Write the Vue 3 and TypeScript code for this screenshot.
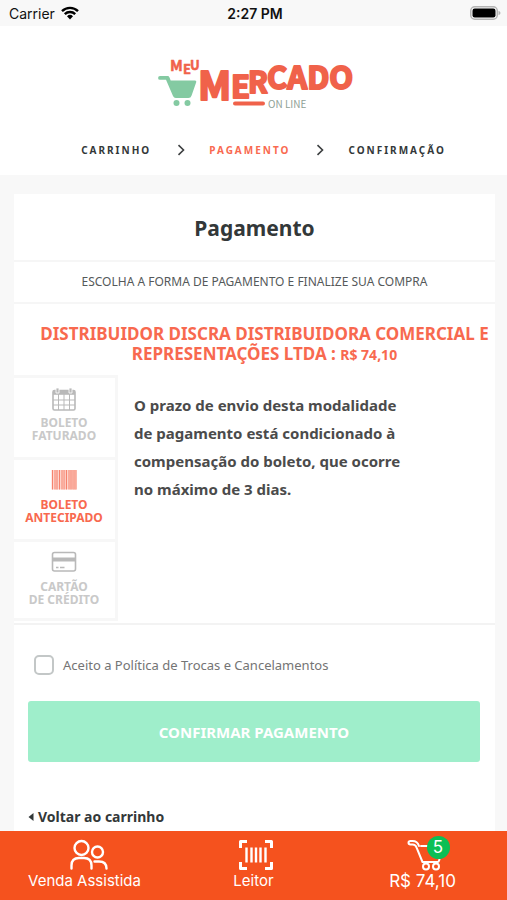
<script setup lang="ts">
import { ref } from 'vue'

type Method = 'faturado' | 'antecipado' | 'cartao'

interface PaymentMethod {
  id: Method
  lines: string[]
}

const steps: string[] = ['Carrinho', 'Pagamento', 'Confirmação']
const currentStep = 1

const methods: PaymentMethod[] = [
  { id: 'faturado', lines: ['Boleto', 'Faturado'] },
  { id: 'antecipado', lines: ['Boleto', 'Antecipado'] },
  { id: 'cartao', lines: ['Cartão', 'de Crédito'] },
]

const selected = ref<Method>('antecipado')
const accepted = ref(false)
</script>

<template>
  <div class="screen">
    <div class="status">
      <span class="carrier">
        Carrier
        <svg width="18" height="14" viewBox="0 0 18 14" aria-hidden="true">
          <g fill="none" stroke="#000" stroke-width="2.4">
            <path d="M1 5.2a11.4 11.4 0 0 1 16 0" />
            <path d="M3.8 8.2a7.4 7.4 0 0 1 10.4 0" />
          </g>
          <path d="M6 10.3a4.3 4.3 0 0 1 6 0L9 13.5z" />
        </svg>
      </span>
      <strong class="clock">2:27 PM</strong>
      <svg class="battery" width="31" height="14" viewBox="0 0 31 14" aria-hidden="true">
        <rect x="0.75" y="0.75" width="26.5" height="12.5" rx="4" fill="#f8f8f8" stroke="#b4b4b4" stroke-width="1.5" />
        <rect x="2.5" y="2.5" width="23" height="9" rx="2.2" />
        <path d="M28.5 4.8q2 .8 2 2.2t-2 2.2z" fill="#b4b4b4" />
      </svg>
    </div>

    <header class="header">
      <svg class="logo" width="194" height="62" viewBox="0 0 194 62" role="img" aria-label="Meu Mercado Online">
        <g fill="#84caa2">
          <path d="M3 22h7.500q1.500 0 2 1.400l1.200 3.100H38q1.800 0 1.200 1.800l-4.600 13.200q-.8 2.500-3.200 2.500H18.800q-2 0-2.800-2L9 25.800H3a1.900 1.900 0 0 1 0-3.800z" />
          <circle cx="19.500" cy="49" r="3" />
          <circle cx="30.500" cy="49" r="3" />
        </g>
        <g class="lettering" fill="#f0624a" stroke="#f0624a" stroke-linejoin="round">
          <text x="13" y="17" font-size="15" stroke-width="0.500">M</text>
          <text x="26" y="20" font-size="13" stroke-width="0.500">E</text>
          <text x="33" y="16" font-size="13" stroke-width="0.500">U</text>
          <text x="41" y="46" font-size="39" stroke-width="2">M</text>
          <text x="74" y="44" font-size="31" stroke-width="2">E</text>
          <text x="91" y="39" font-size="29" stroke-width="2">R</text>
          <text x="110" y="35" font-size="31" stroke-width="2">CADO</text>
          <path d="M78 49.500h28" fill="none" stroke-width="4" stroke-linecap="round" />
        </g>
        <text class="online" x="111" y="54" font-size="10" fill="#8fa196">ON LINE</text>
      </svg>
      <nav aria-label="Etapas">
        <ol class="steps">
          <li v-for="(step, i) in steps" :key="step" class="step" :class="{ current: i === currentStep }">
            <svg v-if="i > 0" width="8" height="12" viewBox="0 0 8 12" aria-hidden="true">
              <path d="M1.500 1.200 6.500 6l-5 4.800" fill="none" stroke="#3c3f40" stroke-width="1.600" />
            </svg>
            <span>{{ step }}</span>
          </li>
        </ol>
      </nav>
    </header>

    <main class="card">
      <h1 class="title">Pagamento</h1>
      <p class="subtitle">Escolha a forma de pagamento e finalize sua compra</p>
      <h2 class="seller">
        Distribuidor Discra Distribuidora Comercial e Representações Ltda : <small>R$ 74,10</small>
      </h2>

      <section class="payment">
        <div class="methods">
          <button
            v-for="m in methods"
            :key="m.id"
            type="button"
            class="method"
            :class="{ active: selected === m.id }"
            :aria-pressed="selected === m.id"
            @click="selected = m.id"
          >
            <svg v-if="m.id === 'faturado'" width="26" height="24" viewBox="0 0 26 24" aria-hidden="true">
              <g fill="none" stroke="currentColor">
                <rect x="2" y="3.500" width="22" height="19.500" rx="1.500" stroke-width="1.600" />
                <path d="M2 13h22M2 18h22M7.500 7V23M13 7V23M18.500 7V23" stroke-width="1" />
                <path d="M2 5.800h22" stroke-width="4" />
              </g>
              <path d="M5 1h3v5H5zM18 1h3v5h-3z" fill="#b9b9b9" stroke="#fff" stroke-width="0.800" />
            </svg>
            <svg v-else-if="m.id === 'antecipado'" width="26" height="24" viewBox="0 0 26 24" aria-hidden="true">
              <path d="M0.500 1h25v19.500h-25z" fill="#fdd5cd" />
              <path
                d="M1.500 1v19.500M4 1v19.500M8.500 1v19.500M11 1v19.500M15.500 1v19.500M18 1v19.500M22 1v19.500M25 1v19.500"
                stroke="#f6836d"
                stroke-width="1"
              />
              <path d="M6 1v19.500M13.200 1v19.500M20 1v19.500M23.500 1v19.500" stroke="#f9a798" stroke-width="2" />
            </svg>
            <svg v-else width="26" height="24" viewBox="0 0 26 24" aria-hidden="true">
              <rect x="1.500" y="1.500" width="23" height="18.500" rx="2" fill="none" stroke="currentColor" stroke-width="1.600" />
              <path d="M1.500 6.500h23v4h-23z" fill="currentColor" />
              <path d="M5 16.500h2.500M9 16.500h4.500" stroke="currentColor" stroke-width="1.500" />
            </svg>
            <span class="label">
              <span v-for="line in m.lines" :key="line">{{ line }}</span>
            </span>
          </button>
        </div>
        <p class="notice">
          O prazo de envio desta modalidade de pagamento está condicionado à compensação do boleto, que ocorre no
          máximo de 3 dias.
        </p>
      </section>

      <form class="confirm" @submit.prevent>
        <div class="terms">
          <input id="terms" v-model="accepted" type="checkbox" />
          <label for="terms">Aceito a Política de Trocas e Cancelamentos</label>
        </div>
        <button type="submit" class="submit">Confirmar pagamento</button>
      </form>

      <a href="#carrinho" class="back">
        <svg width="6" height="8" viewBox="0 0 6 8" aria-hidden="true"><path d="M5.500 0v8L0.500 4z" fill="#333839" /></svg>
        Voltar ao carrinho
      </a>
    </main>

    <nav class="tabbar" aria-label="Principal">
      <a href="#venda" class="tab">
        <svg width="40" height="32" viewBox="-4 0 40 32" aria-hidden="true">
          <g fill="none" stroke="#fff" stroke-width="2.400" stroke-linecap="round">
            <circle cx="12.500" cy="9" r="7" />
            <circle cx="28.500" cy="13" r="5.500" />
            <path d="M2.500 29.500v-3q0-7.500 7.500-7.500h5q7.500 0 7.500 7.500v3" />
            <path d="M25.500 22.500h4.500q7.500 0 7.500 7" />
          </g>
        </svg>
        <span>Venda Assistida</span>
      </a>
      <a href="#leitor" class="tab">
        <svg width="40" height="32" viewBox="0 0 40 32" aria-hidden="true">
          <g fill="none" stroke="#fff" stroke-width="3">
            <path d="M6.500 9V2.500H13M31 2.500h6.500V9M37.500 23v6.500H31M13 29.500H6.500V23" stroke-linejoin="round" />
            <path d="M12.500 8.500v15M17.500 8.500v15M22 8.500v15M26.500 8.500v15M31.500 8.500v15" stroke-width="2.400" />
          </g>
        </svg>
        <span>Leitor</span>
      </a>
      <a href="#cesta" class="tab total">
        <span class="cart">
          <svg width="40" height="32" viewBox="-3 0 40 32" aria-hidden="true">
            <g fill="none" stroke="#fff" stroke-width="2" stroke-linecap="round" stroke-linejoin="round">
              <path d="M15 7h11M13 7q-1.500-5-6.500-5h-2q-2 0-2 1.700t2 1.700h2q3 0 4 3L16.500 23M16.500 23h15q1.200 0 1.600-1.500l1.400-5" />
              <circle cx="20" cy="27.500" r="3" />
              <circle cx="30" cy="27.500" r="3" />
            </g>
          </svg>
          <span class="badge">5</span>
        </span>
        <span>R$ 74,10</span>
      </a>
    </nav>
  </div>
</template>

<style>
body {
  margin: 0;
  background: #f8f8f8;
}
</style>

<style scoped>
.screen {
  display: flex;
  flex-direction: column;
  min-height: 100vh;
  font-family: 'Noto Sans', 'Open Sans', sans-serif;
  color: #333839;
}

svg {
  display: block;
  flex: none;
}

.status {
  display: grid;
  grid-template-columns: 1fr auto 1fr;
  align-items: center;
  height: 26px;
  padding: 0 6px 0 9px;
  background: #f8f8f8;
  color: #111;
  font-family: Inter, sans-serif;
  font-size: 14px;
}

.carrier {
  display: flex;
  align-items: center;
  gap: 6px;
}

.clock {
  font-weight: 600;
}

.battery {
  justify-self: end;
}

.header {
  display: flex;
  flex-direction: column;
  align-items: center;
  gap: 26px;
  box-sizing: border-box;
  height: 149px;
  padding-top: 28px;
  background: #fff;
}

.logo {
  overflow: visible;
}

.lettering,
.online {
  font-family: 'Noto Sans CJK SC', sans-serif;
}

.lettering {
  font-weight: 700;
}

.steps {
  display: flex;
  margin: 0;
  padding: 0 0 0 20px;
  gap: 26px;
  list-style: none;
}

.step {
  display: flex;
  align-items: center;
  gap: 24px;
  font-size: 10px;
  font-weight: 700;
  line-height: 16px;
  letter-spacing: 2px;
  text-transform: uppercase;
}

.current span {
  color: #f96a50;
}

.card {
  display: flex;
  flex: 1;
  flex-direction: column;
  margin: 19px 12px 0 14px;
  background: #fff;
}

.title {
  margin: 0;
  padding-top: 2px;
  border-bottom: 2px solid #f6f6f6;
  font-size: 21px;
  font-weight: 700;
  line-height: 64px;
  text-align: center;
}

.subtitle {
  margin: 0;
  border-bottom: 2px solid #f6f6f6;
  color: #55595a;
  font-size: 12px;
  line-height: 40px;
  text-align: center;
  text-transform: uppercase;
}

.seller {
  margin: 0;
  padding: 20px 0 10px 20px;
  color: #f8694f;
  font-size: 17px;
  font-weight: 700;
  line-height: 20px;
  text-align: center;
  text-transform: uppercase;
}

.seller small {
  font-size: 14px;
}

.payment {
  display: flex;
  padding-bottom: 2px;
  border-bottom: 2px solid #f3f3f3;
}

.methods {
  display: flex;
  flex: none;
  flex-direction: column;
  width: 104px;
}

.method {
  display: flex;
  flex-direction: column;
  align-items: center;
  gap: 5px;
  height: 82px;
  padding: 9px 1px 0 0;
  border: 0 solid #f7f7f7;
  border-width: 3px 3px 0 0;
  background: #fff;
  color: #b9b9b9;
  font: inherit;
  cursor: pointer;
}

.method:last-child {
  border-bottom-width: 3px;
}

.label {
  display: flex;
  flex-direction: column;
  color: #c9c9c9;
  font-size: 12px;
  font-weight: 700;
  line-height: 13px;
  text-transform: uppercase;
}

.active .label {
  color: #f8694f;
}

.notice {
  flex: 1;
  max-width: 276px;
  margin: 0;
  padding: 16px;
  color: #4b4b4b;
  font-size: 15px;
  font-weight: 700;
  line-height: 28px;
}

.confirm {
  display: flex;
  flex-direction: column;
  gap: 26px;
  padding: 30px 15px 0 14px;
}

.terms {
  display: flex;
  align-items: center;
  gap: 9px;
  padding-left: 6px;
  color: #747474;
  font-size: 13px;
  line-height: 20px;
}

.terms input {
  appearance: none;
  width: 20px;
  height: 20px;
  margin: 0;
  border: 2px solid #c3c7c7;
  border-radius: 5px;
  background: #fff;
}

.terms input:checked {
  background: #9feecb;
}

.submit {
  height: 61px;
  border: 0;
  border-radius: 3px;
  background: #9feecb;
  color: #fff;
  font: inherit;
  font-size: 15px;
  font-weight: 700;
  text-transform: uppercase;
  cursor: pointer;
}

.back {
  display: flex;
  align-items: center;
  gap: 4px;
  margin-top: 44px;
  padding: 0 14px;
  color: #333839;
  font-size: 14px;
  font-weight: 700;
  line-height: 22px;
  text-decoration: none;
}

.tabbar {
  position: sticky;
  bottom: 0;
  display: grid;
  grid-template-columns: repeat(3, 1fr);
  height: 69px;
  background: #f5521e;
}

.tab {
  display: flex;
  flex-direction: column;
  align-items: center;
  padding-top: 8px;
  color: #fff;
  font-family: Inter, sans-serif;
  font-size: 15px;
  line-height: 20px;
  text-decoration: none;
}

.tab svg {
  overflow: visible;
}

.total {
  font-size: 17px;
}

.cart {
  position: relative;
}

.badge {
  position: absolute;
  top: -3px;
  right: -7px;
  width: 23px;
  border-radius: 50%;
  background: #0bbf55;
  font-size: 17px;
  line-height: 23px;
  text-align: center;
}
</style>
